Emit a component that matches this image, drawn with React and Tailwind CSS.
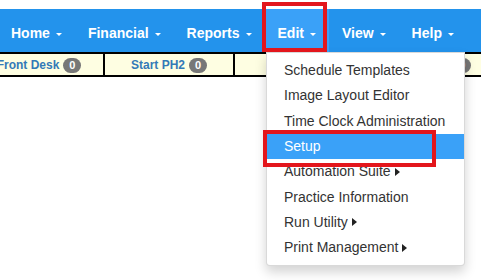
import React from 'react';

const navItems = ['Home', 'Financial', 'Reports', 'Edit', 'View', 'Help'];

const statusCells = [
  { label: 'Front Desk', count: 0 },
  { label: 'Start PH2', count: 0 },
  { label: 'Exam', count: 0 },
  { label: 'Ready PH2', count: 0 },
];

const editMenu = [
  { label: 'Schedule Templates' },
  { label: 'Image Layout Editor' },
  { label: 'Time Clock Administration' },
  { label: 'Setup', active: true },
  { label: 'Automation Suite', sub: true },
  { label: 'Practice Information' },
  { label: 'Run Utility', sub: true },
  { label: 'Print Management', sub: true },
];

const Caret = () => (
  <span className="ml-[6px] mt-[2px] inline-block w-0 h-0 border-x-[3px] border-x-transparent border-t-[3px] border-t-white" />
);

const SubCaret = () => (
  <span className="ml-[4px] inline-block w-0 h-0 border-y-[4px] border-y-transparent border-l-[5px] border-l-[#222]" />
);

const App = () => {
  return (
    <div className="relative w-[481px] h-[280px] overflow-hidden bg-white font-['Liberation_Sans',Arial,sans-serif]">
      {/* Top navbar */}
      <nav className="mt-[9px] h-[43px] bg-[#2393ec] flex">
        <ul className="flex ml-[-2px]">
          {navItems.map((item) => (
            <li
              key={item}
              className={`flex items-center pl-[13px] pr-[13px] pt-[14px] pb-[9px] leading-[20px] text-[14px] font-bold text-white ${
                item === 'Edit' ? 'bg-[#3aa1f8]' : ''
              }`}
            >
              {item}
              <Caret />
            </li>
          ))}
        </ul>
      </nav>

      {/* Status strip */}
      <div className="flex ml-[-25px] h-[25px] border-y-2 border-black bg-[#fefee2]">
        {statusCells.map((c) => (
          <div
            key={c.label}
            className="w-[130px] shrink-0 border-r-2 border-black flex items-center justify-center gap-[4px] pt-[1px]"
          >
            <span className="text-[12px] font-bold text-[#337ab7]">{c.label}</span>
            <span className="w-[18px] h-[15px] rounded-full bg-[#777] text-white text-[11px] font-bold flex items-center justify-center leading-none">
              {c.count}
            </span>
          </div>
        ))}
      </div>

      {/* Edit dropdown */}
      <div className="absolute left-[266px] top-[52px] w-[199px] bg-white border border-[rgba(0,0,0,0.15)] rounded-b-[4px] py-[5px] shadow-[0_6px_12px_rgba(0,0,0,0.175)]">
        {editMenu.map((m) => (
          <div
            key={m.label}
            className={`h-[25.3px] flex items-center pl-[17px] text-[14px] ${
              m.active ? 'bg-[#3aa1f8] text-white' : 'text-[#333]'
            }`}
          >
            {m.label}
            {m.sub && <SubCaret />}
          </div>
        ))}
      </div>

      {/* Highlight annotations */}
      <div className="absolute left-[262px] top-[2px] w-[65px] h-[50px] border-4 border-[#e3161c]" />
      <div className="absolute left-[263px] top-[130px] w-[173px] h-[37px] border-4 border-[#e3161c]" />
    </div>
  );
};

export default App;
